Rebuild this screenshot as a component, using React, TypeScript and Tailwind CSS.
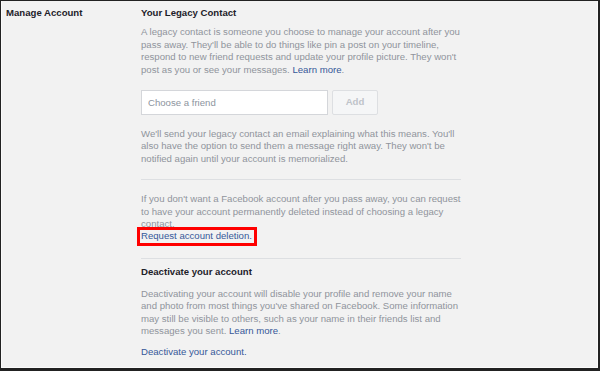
import React from 'react';

const gray = 'text-[#90949c]';

function Divider({ className = '' }: { className?: string }) {
    return <div className={`h-px bg-[#dddfe2] ${className}`} />;
}

function LinkText({ children }: { children: React.ReactNode }) {
    return <a className="text-[#365899] cursor-pointer">{children}</a>;
}

export default function App() {
    return (
        <div className="w-[600px] h-[371px] bg-[#222] pl-px pt-px pr-[2px] pb-[3px]">
            <div className="h-full flex overflow-hidden bg-[#f2f2f2] border-l border-r border-b border-[#fbfbfb] font-['Liberation_Sans',Arial,sans-serif] text-[9.6px] leading-[12.4px]">
                {/* Left label */}
                <div className="w-[139px] shrink-0 pl-[4px] pt-[6px] font-bold text-[#1d2129]">
                    Manage Account
                </div>

                {/* Settings column */}
                <div className="w-[322px] shrink-0 pt-[6px]">
                    <h3 className="font-bold text-[#1d2129]">Your Legacy Contact</h3>
                    <p className={`mt-[7px] ${gray} whitespace-nowrap`}>
                        A legacy contact is someone you choose to manage your account after you<br />
                        pass away. They'll be able to do things like pin a post on your timeline,<br />
                        respond to new friend requests and update your profile picture. They won't<br />
                        post as you or see your messages. <LinkText>Learn more</LinkText>.
                    </p>

                    <div className="mt-[14px] flex gap-[4px]">
                        <input
                            placeholder="Choose a friend"
                            className="w-[187px] h-[25px] px-[6px] bg-white border border-[#d4d6da] text-[9.6px] text-[#1d2129] placeholder:text-[#8d949e] outline-none"
                        />
                        <button className="w-[46px] h-[25px] bg-[#f5f6f7] border border-[#dddfe2] rounded-[2px] font-bold text-[#bec3c9]">
                            Add
                        </button>
                    </div>

                    <p className={`mt-[13px] ${gray} whitespace-nowrap`}>
                        We'll send your legacy contact an email explaining what this means. You'll<br />
                        also have the option to send them a message right away. They won't be<br />
                        notified again until your account is memorialized.
                    </p>

                    <Divider className="mt-[14px] w-[320px]" />

                    <p className={`mt-[13px] ${gray} whitespace-nowrap`}>
                        If you don't want a Facebook account after you pass away, you can request<br />
                        to have your account permanently deleted instead of choosing a legacy<br />
                        contact.
                    </p>
                    <div>
                        <span className="relative inline-block">
                            <LinkText>Request account deletion.</LinkText>
                            <span className="absolute -left-[4px] -right-[5px] -top-[3px] -bottom-[3px] border-[3px] border-[#f00]" />
                        </span>
                    </div>

                    <Divider className="mt-[15px] w-[320px]" />

                    <h3 className="mt-[7px] font-bold text-[#1d2129]">Deactivate your account</h3>
                    <p className={`mt-[9.5px] ${gray} whitespace-nowrap`}>
                        Deactivating your account will disable your profile and remove your name<br />
                        and photo from most things you've shared on Facebook. Some information<br />
                        may still be visible to others, such as your name in their friends list and<br />
                        messages you sent. <LinkText>Learn more</LinkText>.
                    </p>
                    <div className="mt-[9px]">
                        <LinkText>Deactivate your account.</LinkText>
                    </div>

                    <Divider className="mt-[8px] w-[320px]" />
                </div>
            </div>
        </div>
    );
}
